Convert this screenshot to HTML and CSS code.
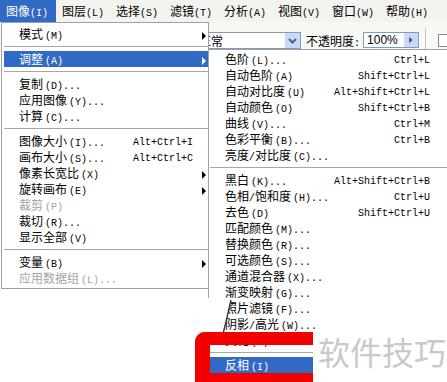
FILE: index.html
```html
<!DOCTYPE html>
<html lang="zh">
<head>
<meta charset="utf-8">
<link rel="stylesheet" href="styles.css">
</head>
<body>
<div class="menubar">
  <div class="mb-item first active"><span class="z">图像</span>(I)</div>
  <div class="mb-item"><span class="z">图层</span>(L)</div>
  <div class="mb-item"><span class="z">选择</span>(S)</div>
  <div class="mb-item"><span class="z">滤镜</span>(T)</div>
  <div class="mb-item"><span class="z">分析</span>(A)</div>
  <div class="mb-item"><span class="z">视图</span>(V)</div>
  <div class="mb-item"><span class="z">窗口</span>(W)</div>
  <div class="mb-item"><span class="z">帮助</span>(H)</div>
</div>
<div class="toolbar">
  <div class="combo"><span class="z">正常</span><span class="combo-btn"><svg width="15" height="15" viewBox="0 0 15 15"><polyline points="4,6 7.5,9.5 11,6" fill="none" stroke="#4a5f88" stroke-width="2"/></svg></span></div>
  <div class="label"><span class="z">不透明度</span>:</div>
  <div class="spin"><span class="spin-val">100%</span><span class="spin-btn"><svg width="14" height="14" viewBox="0 0 14 14"><polygon points="5,4 9,7 5,10" fill="#4a5f88"/></svg></span></div>
  <div class="divider"></div>
  <div class="check"></div>
</div>

<div class="menu menu-main">
  <div class="item"><span><span class="z">模式</span><span class="k">(M)</span></span><span></span><span class="arr"></span></div>
  <div class="sep"></div>
  <div class="item hl"><span><span class="z">调整</span><span class="k">(A)</span></span><span></span><span class="arr"></span></div>
  <div class="sep"></div>
  <div class="item"><span><span class="z">复制</span><span class="k">(D)...</span></span></div>
  <div class="item"><span><span class="z">应用图像</span><span class="k">(Y)...</span></span></div>
  <div class="item"><span><span class="z">计算</span><span class="k">(C)...</span></span></div>
  <div class="sep"></div>
  <div class="item"><span><span class="z">图像大小</span><span class="k">(I)...</span></span><span>Alt+Ctrl+I</span></div>
  <div class="item"><span><span class="z">画布大小</span><span class="k">(S)...</span></span><span>Alt+Ctrl+C</span></div>
  <div class="item"><span><span class="z">像素长宽比</span><span class="k">(X)</span></span><span></span><span class="arr"></span></div>
  <div class="item"><span><span class="z">旋转画布</span><span class="k">(E)</span></span><span></span><span class="arr"></span></div>
  <div class="item dis"><span><span class="z">裁剪</span><span class="k">(P)</span></span></div>
  <div class="item"><span><span class="z">裁切</span><span class="k">(R)...</span></span></div>
  <div class="item"><span><span class="z">显示全部</span><span class="k">(V)</span></span></div>
  <div class="sep"></div>
  <div class="item"><span><span class="z">变量</span><span class="k">(B)</span></span><span></span><span class="arr"></span></div>
  <div class="item dis"><span><span class="z">应用数据组</span><span class="k">(L)...</span></span></div>
</div>

<div class="menu menu-sub">
  <div class="item"><span><span class="z">色阶</span><span class="k">(L)...</span></span><span>Ctrl+L</span></div>
  <div class="item"><span><span class="z">自动色阶</span><span class="k">(A)</span></span><span>Shift+Ctrl+L</span></div>
  <div class="item"><span><span class="z">自动对比度</span><span class="k">(U)</span></span><span>Alt+Shift+Ctrl+L</span></div>
  <div class="item"><span><span class="z">自动颜色</span><span class="k">(O)</span></span><span>Shift+Ctrl+B</span></div>
  <div class="item"><span><span class="z">曲线</span><span class="k">(V)...</span></span><span>Ctrl+M</span></div>
  <div class="item"><span><span class="z">色彩平衡</span><span class="k">(B)...</span></span><span>Ctrl+B</span></div>
  <div class="item"><span><span class="z">亮度</span>/<span class="z">对比度</span><span class="k">(C)...</span></span><span></span></div>
  <div class="sep"></div>
  <div class="item"><span><span class="z">黑白</span><span class="k">(K)...</span></span><span>Alt+Shift+Ctrl+B</span></div>
  <div class="item"><span><span class="z">色相</span>/<span class="z">饱和度</span><span class="k">(H)...</span></span><span>Ctrl+U</span></div>
  <div class="item"><span><span class="z">去色</span><span class="k">(D)</span></span><span>Shift+Ctrl+U</span></div>
  <div class="item"><span><span class="z">匹配颜色</span><span class="k">(M)...</span></span><span></span></div>
  <div class="item"><span><span class="z">替换颜色</span><span class="k">(R)...</span></span><span></span></div>
  <div class="item"><span><span class="z">可选颜色</span><span class="k">(S)...</span></span><span></span></div>
  <div class="item"><span><span class="z">通道混合器</span><span class="k">(X)...</span></span><span></span></div>
  <div class="item"><span><span class="z">渐变映射</span><span class="k">(G)...</span></span><span></span></div>
  <div class="item"><span><span class="z">照片滤镜</span><span class="k">(F)...</span></span><span></span></div>
  <div class="item"><span><span class="z">阴影</span>/<span class="z">高光</span><span class="k">(W)...</span></span><span></span></div>
  <div class="item"><span><span class="z">变化</span><span class="k">(N)...</span></span><span></span></div>
  <div class="sep"></div>
  <div class="item hl"><span><span class="z">反相</span><span class="k">(I)</span></span><span></span></div>
</div>

<svg class="blob" width="50" height="50" viewBox="0 0 50 50">
  <path d="M0 8 L41 8 Q38 26 33 46 L0 46 Z" fill="#fff"/>
  <path d="M41 10 Q37 28 33 44" fill="none" stroke="#333" stroke-width="1.4"/>
</svg>
<div class="mark"></div>
<div class="wm"><span class="wm-text">软件技巧</span></div>
</body>
</html>
```

FILE: styles.css
```css
html, body {
  margin: 0;
  padding: 0;
  width: 447px;
  height: 382px;
  overflow: hidden;
  background: #fff;
}
body {
  position: relative;
  font-family: "Liberation Mono", "Noto Sans CJK SC", monospace;
  font-size: 10px;
  color: #000;
}
.z {
  font-family: "Noto Sans CJK SC", sans-serif;
  font-size: 12px;
}
.k {
  margin-left: 2px;
}

/* menu bar */
.menubar {
  display: flex;
  height: 22px;
  background: #f3f3ef;
}
.mb-item {
  width: 54px;
  flex: none;
  padding-left: 6px;
  box-sizing: border-box;
  line-height: 22px;
  white-space: nowrap;
}
.mb-item.first { width: 56px; }
.mb-item.active {
  background: #316ac5;
  color: #fff;
}

/* toolbar */
.toolbar {
  display: flex;
  align-items: center;
  height: 36px;
  padding-left: 190px;
  background: #f8f8f5;
}
.combo {
  flex: none;
  width: 111px;
  height: 17px;
  box-sizing: border-box;
  border: 1px solid #7f9db9;
  background: #fff;
  display: flex;
  align-items: center;
  justify-content: space-between;
  padding-left: 8px;
}
.combo-btn {
  width: 15px;
  height: 15px;
  background: #c9d8fb;
  display: flex;
}
.label {
  margin-left: 5px;
  white-space: nowrap;
}
.spin {
  flex: none;
  margin-left: 3px;
  width: 56px;
  height: 16px;
  box-sizing: border-box;
  border: 1px solid #7f9db9;
  background: #fff;
  display: flex;
  align-items: center;
  justify-content: space-between;
  padding-left: 3px;
}
.spin-val {
  font-family: "Liberation Sans", sans-serif;
  font-size: 12px;
}
.spin-btn {
  width: 14px;
  height: 14px;
  background: #c9d8fb;
  display: flex;
}
.divider {
  flex: none;
  margin-left: 6px;
  width: 0;
  height: 24px;
  border-left: 1px solid #c4c4c4;
  border-right: 1px solid #fff;
}
.check {
  flex: none;
  margin-left: 11px;
  width: 13px;
  height: 13px;
  box-sizing: border-box;
  border: 1px solid #8a8a8a;
  background: #fff;
}

/* menus */
.menu {
  position: absolute;
  background: #fff;
  border: 1px solid #a0a0a0;
  box-sizing: border-box;
}
.menu-main {
  left: 1px;
  top: 22px;
  width: 208px;
  padding: 3px 0 2px 2px;
}
.menu-sub {
  left: 208px;
  top: 49px;
  width: 250px;
  padding: 1px;
  height: 345px;
}
.item {
  display: grid;
  height: 16px;
  line-height: 16px;
  align-items: center;
  white-space: nowrap;
}
.menu-main .item {
  grid-template-columns: 114px 1fr 6px;
  padding-left: 15px;
  padding-right: 2px;
}
.menu-sub .item {
  grid-template-columns: 1fr auto;
  padding-left: 15px;
  padding-right: 26px;
}
.item.hl {
  background: #316ac5;
  color: #fff;
}
.item.dis {
  color: #a4a4a4;
}
.arr {
  justify-self: end;
  width: 0;
  height: 0;
  border-left: 4px solid currentColor;
  border-top: 4px solid transparent;
  border-bottom: 4px solid transparent;
}
.sep {
  height: 1px;
  margin: 4px 0;
  background: #a6a6a6;
}

/* annotations */
.blob {
  position: absolute;
  left: 190px;
  top: 290px;
}
.mark {
  position: absolute;
  left: 195px;
  top: 332px;
  width: 118px;
  height: 60px;
  box-sizing: border-box;
  border-style: solid;
  border-color: #f20000;
  border-width: 13px 0 19px 15px;
  border-radius: 10px 0 0 10px;
}
.wm {
  position: absolute;
  left: 313px;
  top: 332px;
  right: 0;
  bottom: 0;
  background: #fff;
  padding: 2px 0 0 5px;
}
.wm-text {
  font-family: "Noto Sans CJK SC", sans-serif;
  font-size: 32px;
  line-height: 34px;
  color: #c9c9c9;
  white-space: nowrap;
}
```
